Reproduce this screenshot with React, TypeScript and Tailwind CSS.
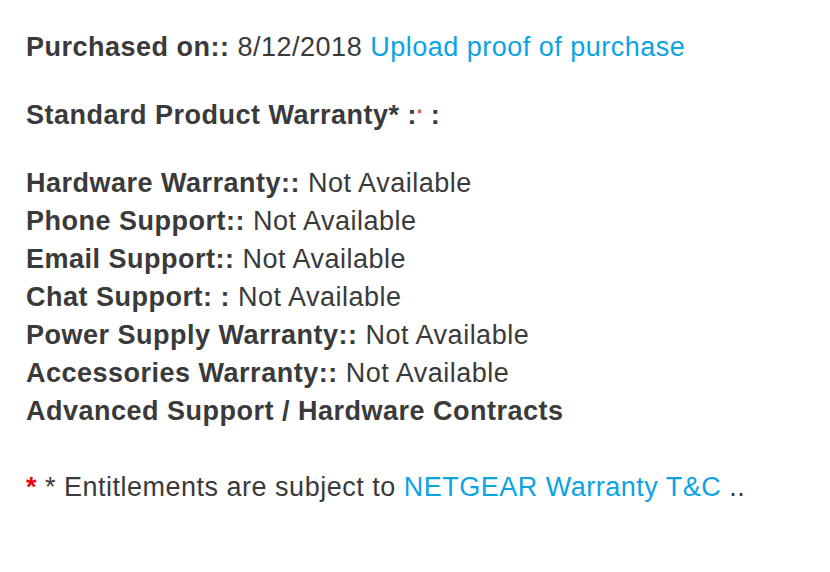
import { FC } from "react";

const rows: [string, string][] = [
  ["Hardware Warranty::", "Not Available"],
  ["Phone Support::", "Not Available"],
  ["Email Support::", "Not Available"],
  ["Chat Support: :", "Not Available"],
  ["Power Supply Warranty::", "Not Available"],
  ["Accessories Warranty::", "Not Available"],
];

const App: FC = () => {
  return (
    <div className="w-[830px] h-[572px] bg-white px-[26px] pt-[28px] font-['Liberation_Sans',Arial,sans-serif] text-[27px] tracking-[0.5px] leading-[38px] text-[#3a3a3a]">
      <p>
        <b>Purchased on::</b> 8/12/2018{" "}
        <a className="text-[#0aa4e3]">Upload proof of purchase</a>
      </p>

      <p className="mt-[30px] font-bold">
        Standard Product Warranty* :
        <sup className="text-[13px] text-red-600 font-normal">*</sup> :
      </p>

      <div className="mt-[30px] flex flex-col">
        {rows.map(([label, value]) => (
          <p key={label}>
            <b>{label}</b> {value}
          </p>
        ))}
        <p className="font-bold">Advanced Support / Hardware Contracts</p>
      </div>

      <p className="mt-[38px]">
        <span className="text-red-600 font-bold">*</span> * Entitlements are
        subject to <a className="text-[#0aa4e3]">NETGEAR Warranty T&amp;C</a>{" "}
        ..
      </p>
    </div>
  );
};

export default App;
